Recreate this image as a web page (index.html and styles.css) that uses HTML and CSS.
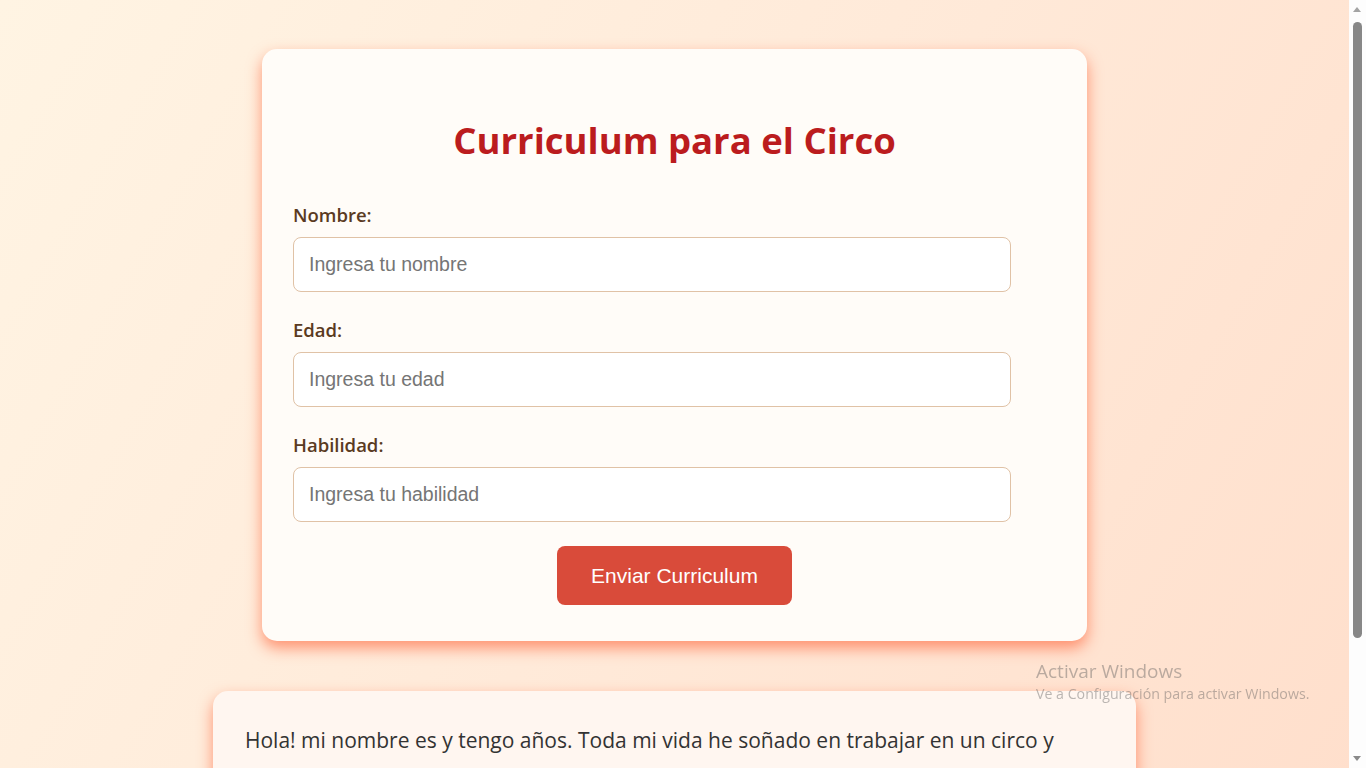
FILE: index.html
```html
<!DOCTYPE html>
<html lang="es">
<head>
<meta charset="utf-8">
<title>Curriculum para el Circo</title>
<link rel="stylesheet" href="styles.css">
</head>
<body>
<main class="page">
  <form class="card form-card">
    <h1 class="title">Curriculum para el Circo</h1>
    <label class="label" for="nombre">Nombre:</label>
    <input class="field" id="nombre" type="text" placeholder="Ingresa tu nombre">
    <label class="label" for="edad">Edad:</label>
    <input class="field" id="edad" type="text" placeholder="Ingresa tu edad">
    <label class="label" for="habilidad">Habilidad:</label>
    <input class="field" id="habilidad" type="text" placeholder="Ingresa tu habilidad">
    <div class="actions">
      <button class="submit" type="button">Enviar Curriculum</button>
    </div>
  </form>
  <section class="card result-card">
    <p class="result-text">Hola! mi nombre es y tengo años. Toda mi vida he soñado en trabajar en un circo y demostrar mi habilidad de . Espero que me den la oportunidad de formar parte de su gran familia.</p>
  </section>
</main>
<div class="watermark">
  <div class="wm-title">Activar Windows</div>
  <div class="wm-sub">Ve a Configuración para activar Windows.</div>
</div>
<div class="scrollbar" aria-hidden="true">
  <span class="sb-arrow sb-up"></span>
  <span class="sb-thumb"></span>
  <span class="sb-arrow sb-down"></span>
</div>
</body>
</html>
```
FILE: styles.css
```css
body {
  margin: 0;
  min-height: 100vh;
  background: linear-gradient(120deg, #fff4e3 0%, #ffe9d8 55%, #ffdfcc 100%);
  background-attachment: fixed;
  font-family: "Open Sans", "Noto Sans", sans-serif;
}
.page {
  box-sizing: border-box;
  width: 1349px;
  display: flex;
  flex-direction: column;
  align-items: center;
  padding: 49px 0 60px;
  gap: 50px;
}
.card {
  box-sizing: border-box;
  border-radius: 15px;
  box-shadow: 0 7px 15px rgba(255, 85, 40, 0.6);
}
.form-card {
  width: 825px;
  background: #fffcf8;
  padding: 67px 31px 36px;
  display: flex;
  flex-direction: column;
  align-items: flex-start;
}
.title {
  align-self: stretch;
  margin: 0 0 40px;
  text-align: center;
  font-size: 36.5px;
  line-height: 48px;
  font-weight: 700;
  color: #bb1c1e;
}
.label {
  display: block;
  font-size: 18.5px;
  line-height: 22px;
  font-weight: 600;
  color: #5a3a22;
  margin-bottom: 11px;
}
.field {
  box-sizing: border-box;
  width: 718px;
  height: 55px;
  padding: 0 15px;
  margin: 0 0 27px;
  border: 1px solid #e0c2a6;
  border-radius: 8px;
  background: #ffffff;
  font-family: "Liberation Sans", Arial, sans-serif;
  font-size: 19.5px;
  color: #333;
  outline: none;
}
.field::placeholder {
  color: #757575;
}
.field:last-of-type {
  margin-bottom: 24px;
}
.actions {
  align-self: stretch;
  display: flex;
  justify-content: center;
}
.submit {
  border: none;
  border-radius: 8px;
  background: #d94b3a;
  color: #ffffff;
  font-family: "Liberation Sans", Arial, sans-serif;
  font-size: 21px;
  line-height: 25px;
  padding: 17px 34px;
  cursor: pointer;
}
.result-card {
  width: 923px;
  background: #fff6f0;
  padding: 27px 32px;
}
.result-text {
  margin: 0;
  font-size: 21px;
  line-height: 44px;
  color: #333333;
}
.watermark {
  position: fixed;
  left: 1036px;
  top: 659px;
  color: rgba(90, 90, 90, 0.42);
  font-family: "Open Sans", sans-serif;
  pointer-events: none;
}
.wm-title {
  font-size: 19px;
  line-height: 24px;
}
.wm-sub {
  font-size: 14.2px;
  line-height: 21px;
}
.scrollbar {
  position: fixed;
  top: 0;
  right: 0;
  width: 17px;
  height: 100vh;
  background: #fdfdfd;
}
.sb-thumb {
  position: absolute;
  left: 4px;
  top: 22px;
  width: 9px;
  height: 616px;
  border-radius: 5px;
  background: #878787;
}
.sb-arrow {
  position: absolute;
  left: 4px;
  width: 0;
  height: 0;
  border-left: 4.5px solid transparent;
  border-right: 4.5px solid transparent;
}
.sb-up {
  top: 7px;
  border-bottom: 5px solid #a3a3a3;
}
.sb-down {
  bottom: 7px;
  border-top: 5px solid #8a8a8a;
}
```
